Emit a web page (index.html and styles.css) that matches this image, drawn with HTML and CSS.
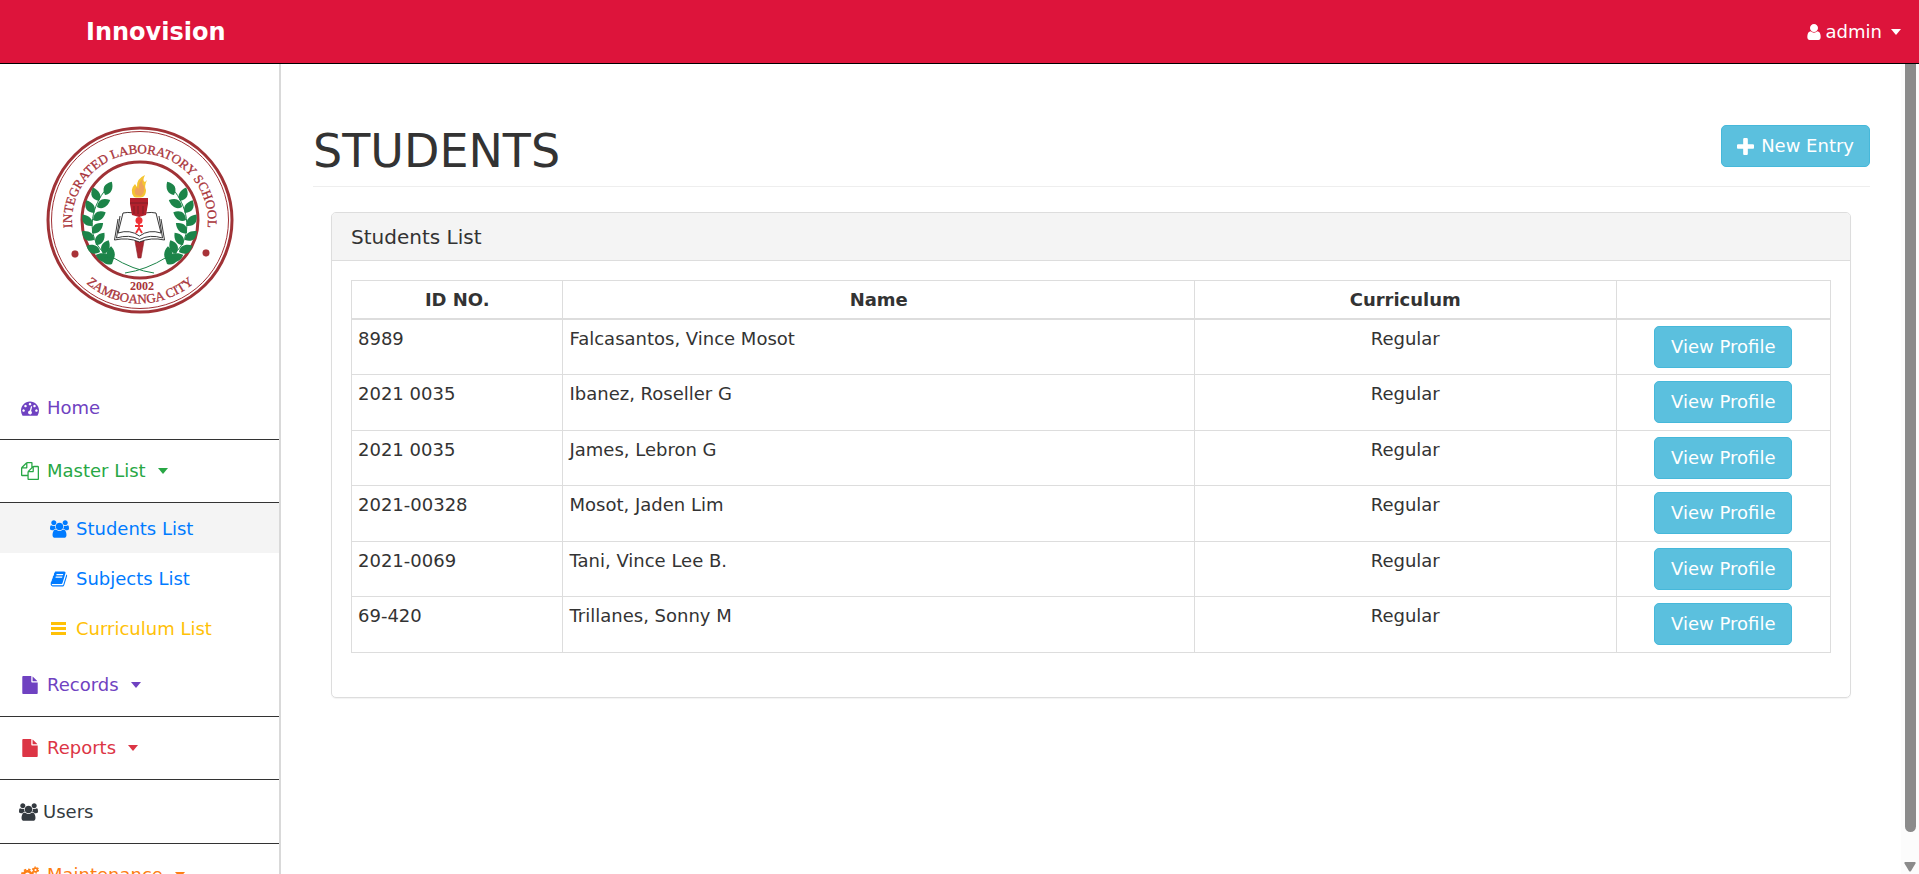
FILE: index.html
```html
<!DOCTYPE html>
<html lang="en">
<head>
<meta charset="utf-8">
<title>Students</title>
<link rel="stylesheet" href="styles.css">
</head>
<body>
<svg class="defs" aria-hidden="true">
  <symbol id="i-users" viewBox="0 0 1920 1792"><path d="M593 896q-162 5-265 128h-134q-82 0-138-40.500t-56-118.500q0-353 124-353 6 0 43.500 21t97.500 42.500 119 21.500q67 0 133-23-5 37-5 66 0 139 81 256zm1071 637q0 120-73 189.500t-194 69.500h-874q-121 0-194-69.500t-73-189.500q0-53 3.500-103.500t14-109 26.500-108.500 43-97.500 62-81 85.500-53.500 111.500-20q10 0 43 21.500t73 48 107 48 135 21.500 135-21.500 107-48 73-48 43-21.500q61 0 111.500 20t85.500 53.500 62 81 43 97.500 26.500 108.500 14 109 3.500 103.500zm-1024-1277q0 106-75 181t-181 75-181-75-75-181 75-181 181-75 181 75 75 181zm704 384q0 159-112.500 271.500t-271.500 112.500-271.500-112.500-112.500-271.500 112.500-271.500 271.500-112.500 271.500 112.500 112.500 271.500zm576 225q0 78-56 118.500t-138 40.500h-134q-103-123-265-128 81-117 81-256 0-29-5-66 66 23 133 23 59 0 119-21.500t97.500-42.500 43.500-21q124 0 124 353zm-128-609q0 106-75 181t-181 75-181-75-75-181 75-181 181-75 181 75 75 181z"/></symbol>
  <symbol id="i-file" viewBox="0 0 1792 1792"><path d="M1152 512v-472q22 14 36 28l408 408q14 14 28 36h-472zm-128 32q0 40 28 68t68 28h544v1056q0 40-28 68t-68 28h-1344q-40 0-68-28t-28-68v-1600q0-40 28-68t68-28h800v544z"/></symbol>
  <symbol id="i-caret" viewBox="0 0 10 6"><path d="M0 0H10L5 6Z"/></symbol>
</svg>

<header class="topbar">
  <a class="brand" href="#">Innovision</a>
  <button class="account" type="button">
    <svg class="icon-user" viewBox="256 128 1280 1536" aria-hidden="true"><path d="M1536 1399q0 109-62.500 187t-150.500 78h-854q-88 0-150.500-78t-62.500-187q0-85 8.500-160.500t31.500-152 58.500-131 94-89 134.500-34.500q131 128 313 128t313-128q76 0 134.500 34.500t94 89 58.500 131 31.500 152 8.500 160.500zm-256-887q0 159-112.500 271.500t-271.500 112.500-271.500-112.500-112.500-271.500 112.500-271.500 271.500-112.500 271.500 112.500 112.500 271.500z"/></svg>
    <span>admin</span>
    <svg class="caret" aria-hidden="true"><use href="#i-caret"/></svg>
  </button>
</header>

<div class="layout">
  <aside class="sidebar">
    <svg class="seal" viewBox="16 16 188 188" role="img" aria-label="School seal">
      <defs>
        <path id="arc-top" d="M46.200 135A68 68 0 1 1 173.800 135"/>
        <path id="arc-bottom" d="M36 146A81.500 81.500 0 0 0 184 146"/>
        <path id="leaf" d="M0 0C-7 -2 -9 -7 -5 -14C1 -11 4 -5 0 0Z"/>
        <g id="laurel">
          <path d="M79 76C64 91 56 117 68 136Q74 145 84 148" fill="none" stroke="#1c8449"/>
          <use href="#leaf" transform="translate(75 85) rotate(47)"/>
          <use href="#leaf" transform="translate(69 91) rotate(-5)"/>
          <use href="#leaf" transform="translate(67 97) rotate(82)"/>
          <use href="#leaf" transform="translate(64 103) rotate(-12)"/>
          <use href="#leaf" transform="translate(63 110) rotate(78)"/>
          <use href="#leaf" transform="translate(62 116) rotate(-20)"/>
          <use href="#leaf" transform="translate(62 123) rotate(68)"/>
          <use href="#leaf" transform="translate(64 130) rotate(-34)"/>
          <use href="#leaf" transform="translate(66 135) rotate(54)"/>
          <use href="#leaf" transform="translate(70 142) rotate(-45)"/>
          <use href="#leaf" transform="translate(73 144) rotate(42)"/>
          <use href="#leaf" transform="translate(80 149) rotate(-55)"/>
          <use href="#leaf" transform="translate(81 151) rotate(20)"/>
          <path d="M71 150Q76 146 84 148L82 154Q76 156 71 150Z"/>
          <path d="M82 147Q103 160 124 163" fill="none" stroke="#1c8449"/>
        </g>
      </defs>
      <g fill="none" stroke="#a03236">
        <circle cx="110" cy="110" r="92" stroke-width="3"/>
        <circle cx="110" cy="110" r="88.500" stroke-width="1"/>
        <circle cx="110" cy="110" r="58" stroke-width="3"/>
      </g>
      <g class="seal-text">
        <text><textPath href="#arc-top" startOffset="50%">INTEGRATED LABORATORY SCHOOL</textPath></text>
        <text><textPath href="#arc-bottom" startOffset="50%">ZAMBOANGA CITY</textPath></text>
        <text class="seal-year" x="112" y="180">2002</text>
        <circle cx="45" cy="144" r="3.400"/>
        <circle cx="176" cy="143" r="3.400"/>
      </g>
      <g fill="#1c8449">
        <use href="#laurel"/>
        <use href="#laurel" transform="matrix(-1 0 0 1 219 0)"/>
      </g>
      <path d="M105 131H114L111 148H108Z" fill="#a92831" stroke="#8b2028" stroke-width=".6"/>
      <g fill="#fff" stroke="#222" stroke-width=".9">
        <path d="M88 109L84.500 130Q98 127 109.500 132Q121 127 134.500 130L131 109"/>
        <path d="M90 106L86.500 128Q99 124 109.500 129.500Q120 124 132.500 128L129 106"/>
        <path d="M93 103L88 123Q100 119 109.500 126Q119 119 131 123L126 103Q116 101 109.500 106Q103 101 93 103Z"/>
      </g>
      <path d="M100 88H118V94L116 105L109 107L102 105L100 94Z" fill="#b3202c"/>
      <path d="M100 93H118M104 96V104M108 96V104M113 96V104" stroke="#7f1f26" fill="none"/>
      <circle cx="109" cy="110.500" r="3.500" fill="#ef3136"/>
      <path d="M109 113V118M105 116H113M109 118L106 123M109 118L112 123" stroke="#ef3136" stroke-width="1.800" fill="none"/>
      <path d="M104 87Q99 80 105 74L107 77Q106 69 115 65Q112 71 115 72L117 70Q114 76 116 80Q116 85 113 87Q108 88 104 87Z" fill="#f5c530"/>
      <path d="M106 85Q103 81 107 77L109 79Q108 72 113 69Q111 74 114 76Q115 83 111 86Z" fill="#efa25a"/>
    </svg>

    <nav class="nav">
      <a class="item purple" href="#"><svg class="icon" viewBox="0 0 1792 1792" aria-hidden="true"><path d="M384 1152q0-53-37.500-90.500t-90.500-37.500-90.500 37.500-37.500 90.500 37.500 90.500 90.500 37.500 90.500-37.500 37.500-90.500zm192-448q0-53-37.500-90.500t-90.500-37.500-90.500 37.500-37.500 90.500 37.500 90.500 90.500 37.500 90.500-37.500 37.500-90.500zm428 481l101-382q6-26-7.500-48.500t-38.500-29.500-48 6.500-30 39.500l-101 382q-60 5-107 43.500t-63 98.500q-20 77 20 146t117 89 146-20 89-117q16-60-6-117t-72-91zm660-33q0-53-37.500-90.500t-90.500-37.500-90.500 37.500-37.500 90.500 37.500 90.500 90.500 37.500 90.500-37.500 37.500-90.500zm-640-640q0-53-37.500-90.500t-90.500-37.500-90.500 37.500-37.500 90.500 37.500 90.500 90.500 37.500 90.500-37.500 37.500-90.500zm448 192q0-53-37.500-90.500t-90.500-37.500-90.500 37.500-37.500 90.500 37.500 90.500 90.500 37.500 90.500-37.500 37.500-90.500zm320 448q0 261-141 483-19 29-54 29h-1402q-35 0-54-29-141-221-141-483 0-182 71-348t191-286 286-191 348-71 348 71 286 191 191 286 71 348z"/></svg><span>Home</span></a>
      <a class="item green" href="#"><svg class="icon" viewBox="0 0 1792 1792" aria-hidden="true"><path d="M1696 384q40 0 68 28t28 68v1216q0 40-28 68t-68 28h-960q-40 0-68-28t-28-68v-288h-544q-40 0-68-28t-28-68v-672q0-40 20-88t48-76l408-408q28-28 76-48t88-20h416q40 0 68 28t28 68v328q68-40 128-40h416zm-544 213l-299 299h299v-299zm-640-384l-299 299h299v-299zm196 647l316-316v-416h-384v416q0 40-28 68t-68 28h-416v640h512v-256q0-40 20-88t48-76zm956 804v-1152h-384v416q0 40-28 68t-68 28h-416v640h896z"/></svg><span>Master List</span><svg class="caret" aria-hidden="true"><use href="#i-caret"/></svg></a>
      <div class="sub">
        <a class="subitem blue active" href="#"><svg class="icon-wide" aria-hidden="true"><use href="#i-users"/></svg><span>Students List</span></a>
        <a class="subitem blue" href="#"><svg class="icon-wide" viewBox="0 0 1920 1792" aria-hidden="true"><path d="M1703 478q40 57 18 129l-275 906q-19 64-76.500 107.500t-122.500 43.500h-923q-77 0-148.500-53.500t-99.500-131.500q-24-67-2-127 0-4 3-27t4-37q1-8-3-21.500t-3-19.500q2-11 8-21t16.500-23.500 16.500-23.500q23-38 45-91.500t30-91.500q3-10 .5-30t-.5-28q3-11 17-28t17-23q21-36 42-92t25-90q1-9-2.500-32t.5-28q4-13 22-30.500t22-22.500q19-26 42.500-84.500t27.500-96.500q1-8-3-25.500t-2-26.500q2-8 9-18t18-23 17-21q8-12 16.500-30.500t15-35 16-36 19.500-32 26.500-23.500 36-11.500 47.500 5.500l-1 3q38-9 51-9h761q74 0 114 56t18 130l-274 906q-36 119-71.500 153.500t-128.500 34.500h-869q-27 0-38 15-11 16-1 43 24 70 144 70h923q29 0 56-15.500t35-41.500l300-987q7-22 5-57 38 15 59 43zm-1064 2q-4 13 2 22.500t20 9.500h608q13 0 25.500-9.500t16.500-22.500l21-64q4-13-2-22.500t-20-9.500h-608q-13 0-25.500 9.500t-16.500 22.500zm-83 256q-4 13 2 22.500t20 9.500h608q13 0 25.500-9.500t16.500-22.500l21-64q4-13-2-22.500t-20-9.500h-608q-13 0-25.500 9.500t-16.500 22.500z"/></svg><span>Subjects List</span></a>
        <a class="subitem yellow" href="#"><svg class="icon-wide" viewBox="0 0 19 18" aria-hidden="true"><path d="M1 2H16V5H1ZM1 7H16V10H1ZM1 12H16V15H1Z"/></svg><span>Curriculum List</span></a>
      </div>
      <a class="item purple" href="#"><svg class="icon" aria-hidden="true"><use href="#i-file"/></svg><span>Records</span><svg class="caret" aria-hidden="true"><use href="#i-caret"/></svg></a>
      <a class="item red" href="#"><svg class="icon" aria-hidden="true"><use href="#i-file"/></svg><span>Reports</span><svg class="caret" aria-hidden="true"><use href="#i-caret"/></svg></a>
      <a class="item dark" href="#"><svg class="icon-wide" aria-hidden="true"><use href="#i-users"/></svg><span>Users</span></a>
      <a class="item orange" href="#"><svg class="icon" viewBox="0 0 18 18" aria-hidden="true"><g fill="none" stroke="currentColor"><circle cx="6.500" cy="9" r="3.800" stroke-width="2.600"/><circle cx="6.500" cy="9" r="5.600" stroke-width="1.800" stroke-dasharray="2.400 2"/><circle cx="14.500" cy="4" r="1.900" stroke-width="1.600"/><circle cx="14.500" cy="4" r="3" stroke-width="1.200" stroke-dasharray="1.600 1.540"/><circle cx="14.500" cy="14" r="1.900" stroke-width="1.600"/><circle cx="14.500" cy="14" r="3" stroke-width="1.200" stroke-dasharray="1.600 1.540"/></g></svg><span>Maintenance</span><svg class="caret" aria-hidden="true"><use href="#i-caret"/></svg></a>
    </nav>
  </aside>

  <main class="content">
    <div class="page-head">
      <h1>STUDENTS</h1>
      <button class="btn" type="button"><svg class="icon-plus" viewBox="192 128 1408 1408" aria-hidden="true"><path d="M1600 736v192q0 40-28 68t-68 28h-416v416q0 40-28 68t-68 28h-192q-40 0-68-28t-28-68v-416h-416q-40 0-68-28t-28-68v-192q0-40 28-68t68-28h416v-416q0-40 28-68t68-28h192q40 0 68 28t28 68v416h416q40 0 68 28t28 68z"/></svg><span>New Entry</span></button>
    </div>
    <section class="card">
      <h2 class="card-title">Students List</h2>
      <div class="card-body">
        <table class="students">
          <colgroup><col class="col-id"><col class="col-name"><col class="col-curriculum"><col class="col-action"></colgroup>
          <thead><tr><th scope="col">ID NO.</th><th scope="col">Name</th><th scope="col">Curriculum</th><th></th></tr></thead>
          <tbody>
            <tr><td>8989</td><td>Falcasantos, Vince Mosot</td><td class="center">Regular</td><td class="center"><button class="btn" type="button">View Profile</button></td></tr>
            <tr><td>2021 0035</td><td>Ibanez, Roseller G</td><td class="center">Regular</td><td class="center"><button class="btn" type="button">View Profile</button></td></tr>
            <tr><td>2021 0035</td><td>James, Lebron G</td><td class="center">Regular</td><td class="center"><button class="btn" type="button">View Profile</button></td></tr>
            <tr><td>2021-00328</td><td>Mosot, Jaden Lim</td><td class="center">Regular</td><td class="center"><button class="btn" type="button">View Profile</button></td></tr>
            <tr><td>2021-0069</td><td>Tani, Vince Lee B.</td><td class="center">Regular</td><td class="center"><button class="btn" type="button">View Profile</button></td></tr>
            <tr><td>69-420</td><td>Trillanes, Sonny M</td><td class="center">Regular</td><td class="center"><button class="btn" type="button">View Profile</button></td></tr>
          </tbody>
        </table>
      </div>
    </section>
  </main>

  <div class="scrollbar" aria-hidden="true">
    <div class="thumb"></div>
    <svg class="scroll-arrow" viewBox="0 0 12 10"><path d="M1 0H11Q12 0 11.500 1.500L7 9Q6 10 5 9L.5 1.500Q0 0 1 0Z"/></svg>
  </div>
</div>
</body>
</html>
```
FILE: styles.css
```css
* { box-sizing: border-box; }

body {
  margin: 0;
  height: 100vh;
  overflow: hidden;
  display: flex;
  flex-direction: column;
  background: #fff;
  color: #333;
  font-family: Verdana, "DejaVu Sans", sans-serif;
  font-size: 18px;
  line-height: 26px;
}

a { color: inherit; text-decoration: none; }
button { font: inherit; cursor: pointer; }
svg { fill: currentColor; flex: none; }
.defs { display: none; }

.topbar {
  flex: none;
  display: flex;
  align-items: center;
  justify-content: space-between;
  height: 64px;
  padding: 0 18px 0 86px;
  background: #dd143b;
  border-bottom: 1px solid #000;
  color: #fff;
}
.brand { font-size: 24px; font-weight: bold; }
.account {
  display: flex;
  align-items: center;
  gap: 5px;
  padding: 0;
  border: 0;
  background: none;
  color: #fff;
}
.icon-user { width: 14px; height: 16px; }
.caret { width: 10px; height: 6px; }
.account .caret { margin-left: 4px; }

.layout { flex: 1; min-height: 0; display: flex; }

.sidebar {
  flex: none;
  width: 281px;
  overflow: hidden;
  border-right: 2px solid #d9d9d9;
}
.seal { display: block; width: 188px; height: 188px; margin: 62px auto 63px; }
.seal-text {
  fill: #a83238;
  font-family: "Liberation Serif", serif;
  font-size: 13px;
  text-anchor: middle;
  stroke: #a83238;
  stroke-width: .3px;
}
.seal-year { font-size: 12px; font-weight: bold; stroke: none; }

.item {
  display: flex;
  align-items: center;
  gap: 8px;
  height: 63px;
  padding-left: 21px;
  border-bottom: 1px solid #333;
}
.item .caret { margin-left: 4px; }
.icon { width: 18px; height: 18px; }
.icon-wide { width: 19px; height: 18px; }
.sub { padding-bottom: 1px; }
.subitem {
  display: flex;
  align-items: center;
  gap: 7px;
  height: 50px;
  padding: 2px 0 0 50px;
}
.active { background: #f4f4f4; }
.purple { color: #6f42c1; }
.green { color: #28a745; }
.blue { color: #007bff; }
.yellow { color: #ffc107; }
.red { color: #dc3545; }
.orange { color: #fd7e14; }
.item.dark { height: 64px; padding-left: 19px; gap: 5px; color: #343a40; }
.item, .item.dark { border-bottom-color: #333; }

.content { flex: 1; min-width: 0; padding: 61px 31px 0 32px; }
.page-head {
  display: flex;
  justify-content: space-between;
  align-items: flex-start;
  padding-bottom: 9px;
  border-bottom: 1px solid #eee;
}
h1 { margin: 0; font-size: 46px; line-height: 52px; font-weight: normal; }

.btn {
  display: inline-flex;
  align-items: center;
  justify-content: center;
  gap: 7px;
  height: 42px;
  padding: 0 15px;
  background: #5bc0de;
  border: 1px solid #46b8da;
  border-radius: 5px;
  color: #fff;
  white-space: nowrap;
}
.icon-plus { width: 17px; height: 17px; }

.card {
  margin: 25px 19px 0 18px;
  border: 1px solid #ddd;
  border-radius: 5px;
  box-shadow: 0 1px 1px rgba(0, 0, 0, .05);
}
.card-title {
  margin: 0;
  padding: 11px 19px 10px;
  background: #f4f4f4;
  border-bottom: 1px solid #ddd;
  border-radius: 4px 4px 0 0;
  font-size: 20px;
  font-weight: normal;
}
.card-body { padding: 19px 19px 44px; }

.students {
  width: 100%;
  table-layout: fixed;
  border-collapse: separate;
  border-spacing: 0;
  border-top: 1px solid #ddd;
  border-left: 1px solid #ddd;
}
.col-id { width: 14.3%; }
.col-name { width: 42.7%; }
.col-curriculum { width: 28.5%; }
.col-action { width: 14.5%; }
.students th,
.students td {
  padding: 6px;
  text-align: left;
  vertical-align: top;
  border-right: 1px solid #ddd;
  border-bottom: 1px solid #ddd;
}
.students th { padding: 6px 6px 5px; text-align: center; border-bottom-width: 2px; }
.students td { height: 55px; }
.students tr:nth-child(even) td { height: 56px; }
.students .center { text-align: center; }
.students .btn { padding: 0 16px; vertical-align: top; }

.scrollbar {
  flex: none;
  width: 18px;
  display: flex;
  flex-direction: column;
  align-items: center;
  justify-content: space-between;
  padding-bottom: 2px;
  background: #fcfcfc;
  color: #8b8b8b;
}
.thumb { width: 11px; height: 95%; border-radius: 0 0 6px 6px; background: #8b8b8b; }
.scroll-arrow { width: 12px; height: 10px; }
```
